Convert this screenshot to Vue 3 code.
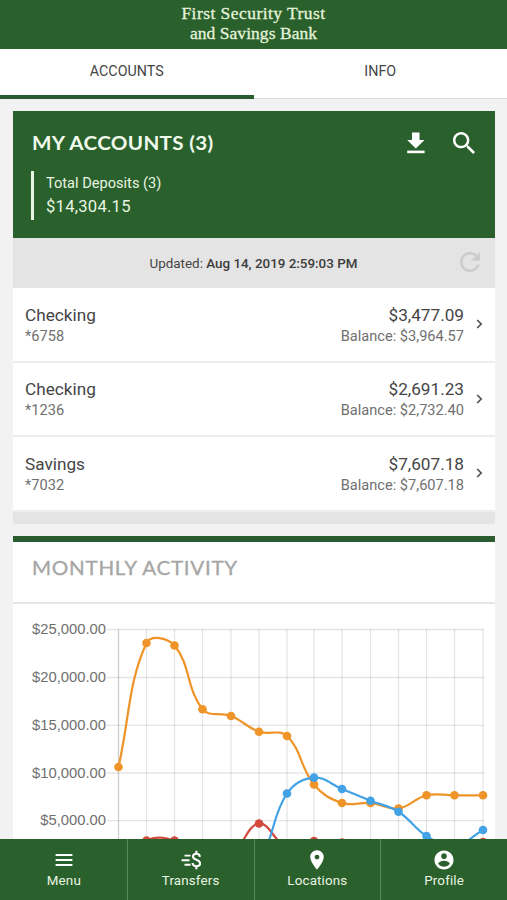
<script setup>
  import {ref} from "vue";

  const AccountList = ref([
    { name: 'Checking', number: '*6758', amount: '$3,477.09', balance: '$3,964.57' },
    { name: 'Checking', number: '*1236', amount: '$2,691.23', balance: '$2,732.40' },
    { name: 'Savings', number: '*7032', amount: '$7,607.18', balance: '$7,607.18' },
  ])
  const ActiveTab = ref('ACCOUNTS')

  // chart, the left edge of the plot is x = 118
  const Columns = [118.5, 146.5, 174.5, 202.5, 231, 259, 287, 314, 342, 370.5, 398.5, 426.5, 454.5, 483]
  const Ticks = [
    { label: '$25,000.00', y: 25.5 },
    { label: '$20,000.00', y: 73.5 },
    { label: '$15,000.00', y: 121.3 },
    { label: '$10,000.00', y: 169 },
    { label: '$5,000.00', y: 216.7 },
  ]
  const Series = [
    { color: '#d24a3e', values: [262, 236.5, 236.5, 254, 250, 219.5, 243, 237, 238.5, 243, 246, 247, 246, 238] },
    { color: '#ee9428', values: [163, 39, 41.5, 105.2, 112, 127.7, 132, 180.5, 199, 199, 204.5, 191.3, 191.3, 191.3] },
    { color: '#42a2e5', values: [264, 264, 264, 264, 264, 255, 189.5, 173.6, 185, 196.7, 207.7, 232, 242, 226] },
  ]

  // smooth line, tension 0.4
  function linePath(values) {
    const pts = values.map((y, i) => ({ x: Columns[i], y }))
    const ctrl = pts.map((p, i) => {
      const a = pts[i - 1] || p
      const b = pts[i + 1] || p
      const d1 = Math.hypot(p.x - a.x, p.y - a.y)
      const d2 = Math.hypot(b.x - p.x, b.y - p.y)
      const fa = 0.4 * d1 / (d1 + d2)
      const fb = 0.4 * d2 / (d1 + d2)
      return {
        px: p.x - fa * (b.x - a.x),
        py: p.y - fa * (b.y - a.y),
        nx: p.x + fb * (b.x - a.x),
        ny: p.y + fb * (b.y - a.y),
      }
    })
    let d = `M${pts[0].x} ${pts[0].y}`
    for (let i = 1; i < pts.length; i++) {
      d += ` C${ctrl[i - 1].nx} ${ctrl[i - 1].ny} ${ctrl[i].px} ${ctrl[i].py} ${pts[i].x} ${pts[i].y}`
    }
    return d
  }
</script>

<template>
  <div class="app">
    <header class="brand">
      <span class="brand_1">First Security Trust</span>
      <span class="brand_2">and Savings Bank</span>
    </header>

    <div class="tabs">
      <button v-for="tab in ['ACCOUNTS', 'INFO']" :class="{ active: tab === ActiveTab }" @click="ActiveTab = tab">{{ tab }}</button>
    </div>

    <main class="content">
      <section class="card">
        <div class="card_top">
          <div class="title_row">
            <h2 class="title"><span>MY ACCOUNTS (3)</span></h2>
            <svg class="icon_download" width="18" height="22" viewBox="0 0 18 22">
              <path d="M5 0.5h7.5v7.5h5L8.8 16.5 0.2 8h4.8z" fill="#fff"/>
              <path d="M0.2 18.6h17.4v2.6H0.2z" fill="#fff"/>
            </svg>
            <svg width="22" height="22" viewBox="3 3 17.5 17.5">
              <path d="M15.5 14h-.79l-.28-.27C15.41 12.59 16 11.11 16 9.5 16 5.91 13.09 3 9.5 3S3 5.91 3 9.5 5.91 16 9.5 16c1.61 0 3.09-.59 4.23-1.57l.27.28v.79l5 4.99L20.49 19l-4.99-5zm-6 0C7.01 14 5 11.99 5 9.5S7.01 5 9.5 5 14 7.01 14 9.5 11.99 14 9.5 14z" fill="#fff"/>
            </svg>
          </div>
          <div class="deposits">
            <p class="dep_label">Total Deposits (3)</p>
            <p class="dep_sum">$14,304.15</p>
          </div>
        </div>
        <div class="updated">
          <p>Updated: <b>Aug 14, 2019 2:59:03 PM</b></p>
          <svg class="icon_refresh" width="20" height="20" viewBox="4 4 16 16">
            <path d="M17.65 6.35C16.2 4.9 14.21 4 12 4c-4.42 0-7.99 3.58-7.99 8s3.57 8 7.99 8c3.73 0 6.84-2.55 7.73-6h-2.08c-.82 2.33-3.04 4-5.65 4-3.31 0-6-2.69-6-6s2.69-6 6-6c1.66 0 3.14.69 4.22 1.78L13 11h7V4l-2.35 2.35z" fill="#cbcbcb"/>
          </svg>
        </div>
        <div class="account" v-for="item in AccountList">
          <div class="left">
            <p class="big">{{ item.name }}</p>
            <p class="small">{{ item.number }}</p>
          </div>
          <div class="right">
            <p class="big">{{ item.amount }}</p>
            <p class="small">Balance: {{ item.balance }}</p>
          </div>
          <svg width="7" height="10" viewBox="0 0 7 10">
            <path d="M1.2 1l4 4-4 4" fill="none" stroke="#4c4c4c" stroke-width="1.6"/>
          </svg>
        </div>
        <div class="card_end"></div>
      </section>

      <section class="card activity">
        <h2 class="title2"><span>MONTHLY ACTIVITY</span></h2>
        <svg class="chart" width="482" height="270" viewBox="13 0 482 270">
          <g stroke="#000" stroke-opacity=".1" stroke-width="1.3">
            <line v-for="x in Columns" :x1="x" :x2="x" y1="25" y2="270"/>
            <line v-for="t in Ticks" x1="107" x2="484" :y1="t.y" :y2="t.y"/>
            <line x1="118.5" x2="118.5" y1="25" y2="270"/>
          </g>
          <text v-for="t in Ticks" x="106" :y="t.y + 4.5" text-anchor="end">{{ t.label }}</text>
          <g v-for="s in Series">
            <path :d="linePath(s.values)" fill="none" :stroke="s.color" stroke-width="2.2"/>
            <circle v-for="(y, i) in s.values" :cx="Columns[i]" :cy="y" r="4.3" :fill="s.color"/>
          </g>
        </svg>
      </section>
    </main>

    <nav class="bottom">
      <a>
        <svg width="20" height="20" viewBox="0 0 20 20">
          <path d="M1.6 5h16.8M1.6 10h16.8M1.6 15h16.8" stroke="#fff" stroke-width="2"/>
        </svg>
        Menu
      </a>
      <a>
        <svg width="20" height="20" viewBox="0 0 20 20">
          <path d="M3.5 5.6h6M0.5 10.2h8M3.5 14.8h6" stroke="#fff" stroke-width="1.9"/>
          <path d="M18.9 6.8C18.7 4.7 17.3 3.7 15.4 3.7c-1.9 0-3.4 1-3.4 2.8 0 4 7.1 2.5 7.1 6.7 0 1.9-1.6 3-3.6 3-2.2 0-3.8-1.1-4-3.2M15.4 0.8v2.9M15.4 16v3.3" fill="none" stroke="#fff" stroke-width="2.1"/>
        </svg>
        Transfers
      </a>
      <a>
        <svg width="20" height="20" viewBox="2.5 2.5 19 19">
          <path d="M12 2.8C8.4 2.8 5.6 5.6 5.6 9.2c0 4.9 6.4 12 6.4 12s6.4-7.1 6.4-12c0-3.6-2.8-6.4-6.4-6.4zm0 8.7a2.3 2.3 0 1 1 0-4.6 2.3 2.3 0 0 1 0 4.6z" fill="#fff"/>
        </svg>
        Locations
      </a>
      <a>
        <svg width="20" height="20" viewBox="1.5 1.5 21 21">
          <path d="M12 2C6.48 2 2 6.48 2 12s4.48 10 10 10 10-4.48 10-10S17.52 2 12 2zm0 3c1.66 0 3 1.34 3 3s-1.34 3-3 3-3-1.34-3-3 1.34-3 3-3zm0 14.2c-2.5 0-4.71-1.28-6-3.22.03-1.99 4-3.08 6-3.08 1.99 0 5.97 1.09 6 3.08-1.29 1.94-3.5 3.22-6 3.22z" fill="#fff"/>
        </svg>
        Profile
      </a>
    </nav>
  </div>
</template>

<style>
  body {
    overflow: hidden;
  }
</style>
<style scoped>
  .app {
    width: 507px;
    height: 900px;
    display: flex;
    flex-direction: column;
    overflow: hidden;
    background-color: #f2f2f2;
    font-family: Roboto, "Liberation Sans", sans-serif;
    color: #454545;
  }

  p,
  h2 {
    margin: 0;
  }

  svg {
    display: block;
    flex: none;
  }

  .brand {
    flex: none;
    box-sizing: border-box;
    height: 49px;
    padding-top: 3px;
    display: flex;
    flex-direction: column;
    align-items: center;
    background-color: #2a602c;
    color: #e4f3dc;
    font-family: "Liberation Serif", serif;
    font-size: 17.5px;
    line-height: 20px;
    -webkit-text-stroke: 0.3px #e4f3dc;
  }

  .brand_1 {
    letter-spacing: 0.45px;
  }

  .brand_2 {
    letter-spacing: 0.05px;
  }

  .tabs {
    flex: none;
    display: flex;
    height: 50px;
  }

  .tabs button {
    flex: 1;
    box-sizing: border-box;
    padding: 0 0 5px;
    background-color: #fff;
    border: none;
    border-bottom: 1px solid #dcdcdc;
    font-family: Roboto, sans-serif;
    font-size: 14.3px;
    color: #454545;
  }

  .tabs .active {
    padding: 0 0 2px;
    border-bottom: 4px solid #2a5c30;
  }

  .content {
    flex: 1;
    min-height: 0;
    overflow: hidden;
    padding: 12px 12px 0 13px;
  }

  .card_top {
    box-sizing: border-box;
    height: 127px;
    padding: 20px 20px 0 18px;
    background-color: #2a602c;
    color: #e8f5e2;
  }

  .title_row {
    display: flex;
    align-items: center;
    height: 24px;
  }

  .title {
    flex: 1;
    padding-left: 1px;
    font-family: Lato, sans-serif;
    font-size: 19px;
    font-weight: 700;
    line-height: 24px;
    letter-spacing: 0.3px;
    color: #f1faec;
  }

  .title span,
  .title2 span {
    display: inline-block;
    transform-origin: left;
    transform: scaleX(1.085);
  }

  .icon_download {
    margin-right: 28px;
  }

  .deposits {
    box-sizing: border-box;
    height: 49px;
    margin-top: 16px;
    padding-left: 12px;
    border-left: 3px solid #e8f5e2;
  }

  .dep_label {
    padding-top: 1px;
    font-size: 14.6px;
    line-height: 23px;
  }

  .dep_sum {
    font-size: 16.6px;
    line-height: 24px;
    letter-spacing: 0.25px;
  }

  .updated {
    display: flex;
    align-items: center;
    height: 50px;
    padding-right: 15px;
    background-color: #e4e4e4;
    font-size: 13.4px;
  }

  .updated p {
    flex: 1;
    padding-left: 34px;
    text-align: center;
  }

  .updated b {
    font-weight: 500;
    color: #3c3c3c;
  }

  .icon_refresh {
    margin-bottom: 2px;
  }

  .account {
    box-sizing: border-box;
    display: flex;
    align-items: center;
    height: 74.5px;
    padding: 0 12px 0 12px;
    background-color: #fff;
    border-bottom: 2px solid #ededed;
  }

  .left {
    flex: 1;
    padding-top: 2px;
  }

  .right {
    padding-top: 2px;
    margin-right: 12px;
    text-align: right;
  }

  .big {
    font-size: 17.2px;
    line-height: 21px;
  }

  .small {
    font-size: 14.6px;
    line-height: 20px;
    color: #707070;
  }

  .card_end {
    height: 12.5px;
    background-color: #e4e4e4;
    border-radius: 0 0 3px 3px;
  }

  .activity {
    margin-top: 12px;
    border-top: 6px solid #2a5c30;
    background-color: #fff;
  }

  .title2 {
    box-sizing: border-box;
    height: 62px;
    padding: 14px 0 0 19px;
    border-bottom: 2px solid #e6e6e6;
    font-family: Lato, sans-serif;
    font-size: 19px;
    font-weight: 400;
    line-height: 24px;
    letter-spacing: 0.65px;
    color: #a6a6a6;
    -webkit-text-stroke: 0.3px #a6a6a6;
  }

  .chart text {
    font-family: "Liberation Sans", Arial, sans-serif;
    font-size: 14.8px;
    fill: #707070;
  }

  .bottom {
    flex: none;
    display: flex;
    height: 61px;
    padding-left: 1px;
    background-color: #2a602c;
  }

  .bottom a {
    flex: 1;
    display: flex;
    flex-direction: column;
    align-items: center;
    padding-top: 11px;
    font-size: 13.4px;
    line-height: 22px;
    color: #e8f5e2;
    letter-spacing: 0.15px;
  }

  .bottom a + a {
    border-left: 1px solid #5b8a59;
  }
</style>
